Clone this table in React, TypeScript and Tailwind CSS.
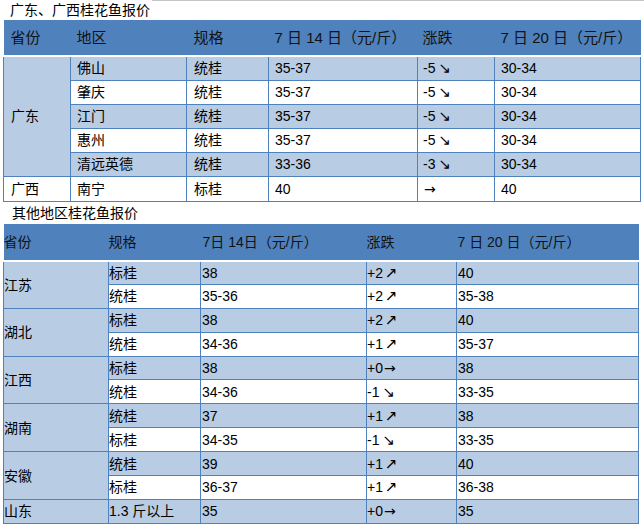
const Down = () => <span className="ml-[3px] font-['DejaVu_Sans',sans-serif] text-[15px] leading-[14px]">↘</span>;
const Up = () => <span className="ml-[2px] font-['DejaVu_Sans',sans-serif] text-[15px] leading-[14px]">↗</span>;
const Flat = () => <span className="ml-[1px] font-['DejaVu_Sans',sans-serif] text-[14px] leading-[14px]">→</span>;

const gd = [
  { city: '佛山', spec: '统桂', a: '35-37', d: '-5', b: '30-34' },
  { city: '肇庆', spec: '统桂', a: '35-37', d: '-5', b: '30-34' },
  { city: '江门', spec: '统桂', a: '35-37', d: '-5', b: '30-34' },
  { city: '惠州', spec: '统桂', a: '35-37', d: '-5', b: '30-34' },
  { city: '清远英德', spec: '统桂', a: '33-36', d: '-3', b: '30-34' },
];

type Row = { spec: string; a: string; d: string; dir: 'up' | 'down' | 'flat'; b: string };
const other: { prov: string; rows: Row[] }[] = [
  { prov: '江苏', rows: [
    { spec: '标桂', a: '38', d: '+2', dir: 'up', b: '40' },
    { spec: '统桂', a: '35-36', d: '+2', dir: 'up', b: '35-38' },
  ] },
  { prov: '湖北', rows: [
    { spec: '标桂', a: '38', d: '+2', dir: 'up', b: '40' },
    { spec: '统桂', a: '34-36', d: '+1', dir: 'up', b: '35-37' },
  ] },
  { prov: '江西', rows: [
    { spec: '标桂', a: '38', d: '+0', dir: 'flat', b: '38' },
    { spec: '统桂', a: '34-36', d: '-1', dir: 'down', b: '33-35' },
  ] },
  { prov: '湖南', rows: [
    { spec: '统桂', a: '37', d: '+1', dir: 'up', b: '38' },
    { spec: '标桂', a: '34-35', d: '-1', dir: 'down', b: '33-35' },
  ] },
  { prov: '安徽', rows: [
    { spec: '统桂', a: '39', d: '+1', dir: 'up', b: '40' },
    { spec: '标桂', a: '36-37', d: '+1', dir: 'up', b: '36-38' },
  ] },
  { prov: '山东', rows: [
    { spec: '1.3 斤以上', a: '35', d: '+0', dir: 'flat', b: '35' },
  ] },
];

function Arrow({ dir }: { dir: 'up' | 'down' | 'flat' }) {
  if (dir === 'up') return <Up />;
  if (dir === 'down') return <Down />;
  return <Flat />;
}

export default function App() {
  let idx = 0;
  return (
    <div className="w-[644px] h-[530px] overflow-hidden bg-white text-black font-['Liberation_Sans','Noto_Sans_CJK_SC',sans-serif]">
      <div className="flex h-[20px] items-start">
        <div className="pl-[10px] text-[14px] leading-[20px]">广东、广西桂花鱼报价</div>
        <div className="ml-[2px] flex-1 border-t border-[#c4c4c8]" />
      </div>

      <table className="ml-[3px] w-[637px] table-fixed border-collapse text-[14px] leading-[18px]">
        <colgroup>
          <col className="w-[67px]" />
          <col className="w-[116px]" />
          <col className="w-[82px]" />
          <col className="w-[149px]" />
          <col className="w-[77px]" />
          <col className="w-[146px]" />
        </colgroup>
        <thead>
          <tr className="h-[36px] bg-[#4f81bd] text-[15px] text-[#111]">
            <th className="border-b-2 border-white pl-[7px] text-left font-normal">省份</th>
            <th className="border-b-2 border-white pl-[6px] text-left font-normal">地区</th>
            <th className="border-b-2 border-white pl-[7px] text-left font-normal">规格</th>
            <th className="border-b-2 border-white pl-[6px] text-left font-normal">7 日 14 日（元/斤）</th>
            <th className="border-b-2 border-white pl-[5px] text-left font-normal">涨跌</th>
            <th className="border-b-2 border-white pl-[6px] text-left font-normal">7 日 20 日（元/斤）</th>
          </tr>
        </thead>
        <tbody>
          {gd.map((r, i) => (
            <tr key={r.city} className={i % 2 === 0 ? 'h-[24px] bg-[#b8cce4]' : 'h-[24px] bg-white'}>
              {i === 0 && (
                <td rowSpan={5} className="border border-[#4f81bd] bg-[#b8cce4] pl-[7px]">广东</td>
              )}
              <td className="border border-[#4f81bd] pl-[6px]">{r.city}</td>
              <td className="border border-[#4f81bd] pl-[7px]">{r.spec}</td>
              <td className="border border-[#4f81bd] pl-[6px]">{r.a}</td>
              <td className="border border-[#4f81bd] pl-[5px]">{r.d}<Down /></td>
              <td className="border border-[#4f81bd] pl-[6px]">{r.b}</td>
            </tr>
          ))}
          <tr className="h-[25px] bg-white">
            <td className="border border-[#4f81bd] pl-[7px]">广西</td>
            <td className="border border-[#4f81bd] pl-[6px]">南宁</td>
            <td className="border border-[#4f81bd] pl-[7px]">标桂</td>
            <td className="border border-[#4f81bd] pl-[6px]">40</td>
            <td className="border border-[#4f81bd] pl-[5px]"><Flat /></td>
            <td className="border border-[#4f81bd] pl-[6px]">40</td>
          </tr>
        </tbody>
      </table>

      <div className="h-[22px] pl-[12px] text-[14px] leading-[22px]">其他地区桂花鱼报价</div>

      <table className="ml-[3px] w-[635px] table-fixed border-collapse text-[14px] leading-[18px]">
        <colgroup>
          <col className="w-[105px]" />
          <col className="w-[92px]" />
          <col className="w-[166px]" />
          <col className="w-[90px]" />
          <col className="w-[182px]" />
        </colgroup>
        <thead>
          <tr className="h-[37px] bg-[#4f81bd] text-[14px] text-[#111]">
            <th className="border-b-2 border-white text-left font-normal">省份</th>
            <th className="border-b-2 border-white text-left font-normal">规格</th>
            <th className="border-b-2 border-white pl-[2px] text-left font-normal">7日 14日（元/斤）</th>
            <th className="border-b-2 border-white text-left font-normal">涨跌</th>
            <th className="border-b-2 border-white pl-[1px] text-left font-normal">7 日 20 日（元/斤）</th>
          </tr>
        </thead>
        <tbody>
          {other.map((g) =>
            g.rows.map((r, j) => {
              const light = idx++ % 2 === 0;
              return (
                <tr key={g.prov + j} className={light ? 'h-[23.9px] bg-[#b8cce4]' : 'h-[23.9px] bg-white'}>
                  {j === 0 && (
                    <td rowSpan={g.rows.length} className="border border-[#4f81bd] bg-[#b8cce4]">{g.prov}</td>
                  )}
                  <td className="border border-[#4f81bd]">{r.spec}</td>
                  <td className="border border-[#4f81bd] pl-[1px]">{r.a}</td>
                  <td className="border border-[#4f81bd]">{r.d}<Arrow dir={r.dir} /></td>
                  <td className="border border-[#4f81bd] pl-[1px]">{r.b}</td>
                </tr>
              );
            })
          )}
        </tbody>
      </table>
    </div>
  );
}
